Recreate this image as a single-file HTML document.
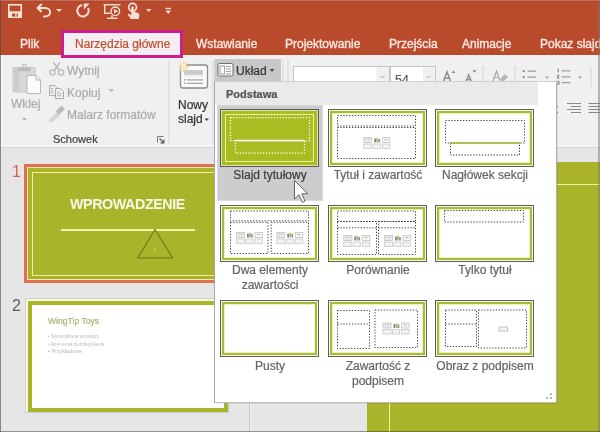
<!DOCTYPE html>
<html><head><meta charset="utf-8"><style>
html,body{margin:0;padding:0;overflow:hidden}
body{width:600px;height:432px;overflow:hidden;position:relative;background:#E6E6E6;font-family:"Liberation Sans",sans-serif}
.a{position:absolute}
.t{position:absolute;white-space:nowrap;will-change:transform;-webkit-text-stroke:0.22px currentColor}
svg{overflow:visible}
</style></head><body>
<div class="a" style="left:0px;top:0px;width:600px;height:55px;background:#BA4A2C"></div>
<div class="a" style="left:0px;top:55px;width:600px;height:92px;background:#F0F0F0"></div>
<div class="a" style="left:0px;top:146px;width:600px;height:1px;background:#F7F7F7"></div>
<div class="a" style="left:0px;top:147px;width:600px;height:1px;background:#D6D6D6"></div>
<div class="a" style="left:0px;top:148px;width:600px;height:284px;background:#E6E6E6"></div>
<svg class="a" style="left:0;top:0" width="180" height="22" viewBox="0 0 180 22">
<g fill="none" stroke="#F7E2D8" stroke-width="1.6">
<rect x="8.8" y="4.8" width="12.4" height="12.4"/>
</g>
<rect x="8" y="11.3" width="14" height="6.7" fill="#F7E2D8"/>
<rect x="12" y="13.6" width="6" height="3" fill="#BA4A2C"/>
<rect x="15.2" y="13.6" width="1.4" height="3" fill="#F7E2D8"/>
<g fill="none" stroke="#F7E2D8" stroke-width="2" stroke-linecap="round" stroke-linejoin="round">
<path d="M41.2,4.6 L37.6,8 L41.2,11.4"/>
<path d="M38,8 H45 C48,8 50.2,10 50.2,12.3 C50.2,14.6 48,16.4 45,16.4 H44"/>
</g>
<path d="M82.3,5.1 A5.7,5.7 0 1 0 88,8" fill="none" stroke="#F7E2D8" stroke-width="2"/>
<path d="M83.8,3.6 L89.6,3.6 L83.8,9.6 Z" fill="#F7E2D8"/>
<path d="M56,9 H62 L59,12 Z" fill="#F7E2D8"/>
<g fill="none" stroke="#F7E2D8" stroke-width="1.4">
<path d="M103.5,4.7 H120.5"/>
<path d="M104.7,5 V13.3 H110"/>
<circle cx="115.3" cy="11.3" r="4.3"/>
<path d="M107,18.3 H117.5"/>
<path d="M112,15.5 V18"/>
<circle cx="132.6" cy="7.3" r="3.9" stroke-width="1.7"/>
</g>
<path d="M114,9 L118,11.3 L114,13.6 Z" fill="#F7E2D8"/>
<path d="M131.3,7.5 C131.3,6.3 133.7,6.3 133.7,7.5 V12 L137.5,12.8 C139,13.2 139.6,14 139.3,15.5 L138.6,19 H131 L128,15 C127.4,14.2 128.3,13.4 129.2,14 L131.3,15.4 Z" fill="#F7E2D8"/>
<path d="M146,9 H151.5 L148.75,12 Z" fill="#F7E2D8"/>
<rect x="165.5" y="7.8" width="5.6" height="1.3" fill="#F7E2D8"/>
<path d="M165.5,10.5 H171.1 L168.3,14 Z" fill="#F7E2D8"/>
</svg>
<div class="t" style="left:19.5px;top:37.33px;font-size:12px;line-height:14.4px;color:#FCE9E2;font-weight:normal;-webkit-text-stroke:0.35px currentColor">Plik</div>
<div class="t" style="left:196px;top:37.33px;font-size:12px;line-height:14.4px;color:#FCE9E2;font-weight:normal;-webkit-text-stroke:0.35px currentColor">Wstawianie</div>
<div class="t" style="left:285px;top:37.33px;font-size:12px;line-height:14.4px;color:#FCE9E2;font-weight:normal;-webkit-text-stroke:0.35px currentColor">Projektowanie</div>
<div class="t" style="left:389px;top:37.33px;font-size:12px;line-height:14.4px;color:#FCE9E2;font-weight:normal;-webkit-text-stroke:0.35px currentColor">Przejścia</div>
<div class="t" style="left:462.3px;top:37.33px;font-size:12px;line-height:14.4px;color:#FCE9E2;font-weight:normal;-webkit-text-stroke:0.35px currentColor">Animacje</div>
<div class="t" style="left:540px;top:37.33px;font-size:12px;line-height:14.4px;color:#FCE9E2;font-weight:normal;-webkit-text-stroke:0.35px currentColor">Pokaz slajdów</div>
<div class="a" style="left:61px;top:30px;width:122px;height:28px;box-sizing:border-box;border:3px solid #CF1D8E;background:#F3EEF1"></div>
<div class="t" style="left:74.5px;top:37.33px;font-size:12px;line-height:14.4px;color:#C14F30;font-weight:normal;-webkit-text-stroke:0.2px currentColor">Narzędzia główne</div>
<svg class="a" style="left:0;top:55" width="600" height="92" viewBox="0 55 600 92">
<!-- paste icon -->
<rect x="13" y="67.5" width="22.5" height="24.5" rx="1" fill="#D8D8D8" stroke="#CACACA" stroke-width="1"/>
<rect x="13.5" y="68" width="6" height="23.5" fill="#CDCDCD"/>
<rect x="18" y="67" width="12.5" height="4.2" rx="1" fill="#BDBDBD"/>
<circle cx="24.2" cy="66" r="1.8" fill="none" stroke="#BDBDBD" stroke-width="1.2"/>
<path d="M27,75.5 H36 L40.5,80 V93.5 H27 Z" fill="#FBFBFB" stroke="#B8B8B8" stroke-width="1"/>
<path d="M36,75.5 V80 H40.5" fill="none" stroke="#B8B8B8" stroke-width="1"/>
<path d="M22,118 H27 L24.5,120.5 Z" fill="#B0B0B0"/>
<!-- scissors -->
<g fill="none" stroke="#B8B8B8" stroke-width="1.3">
<circle cx="52.5" cy="72.5" r="2.6"/><circle cx="61" cy="72.5" r="2.6"/>
<path d="M54,70.5 L60,62.5 M59.5,70.5 L53.5,62.5"/>
</g>
<!-- copy -->
<path d="M49.7,85.6 H54.8 L56.6,87.4 V95.6 H49.7 Z" fill="#F2F2F2" stroke="#A4A4A4" stroke-width="0.95"/>
<path d="M55.6,88.6 H60.6 L63.5,91.5 V98.6 H55.6 Z" fill="#F4F4F4" stroke="#A0A0A0" stroke-width="0.95"/>
<g stroke="#A8A8A8" stroke-width="0.9"><path d="M51,88.5 H53.2 M51,90.6 H53.2 M51,92.6 H53.2 M57.2,91.8 H59.5 M57.2,93.8 H61.8 M57.2,95.8 H61.8"/></g>
<!-- brush -->
<path d="M49,119.5 L56,112.5 L59.5,116 L52.5,122 Z" fill="#D6D6D6"/>
<path d="M55.5,111.5 L61.5,105.5 L65,109 L59,115 Z" fill="#BBBBBB"/>
<path d="M49,119.5 L52.5,122 L49.5,121.5 Z" fill="#C8C8C8"/>
<path d="M108.5,74 H114 L111.25,77 Z" fill="#B8B8B8" transform="translate(0,15)"/>
<!-- dialog launcher -->
<g fill="none" stroke="#7A7A7A" stroke-width="1"><path d="M157.5,142.5 V136.5 H163.5"/></g>
<path d="M159.5,138.5 L163.8,142.8 M163.8,139.5 V142.8 H160.5" stroke="#5A5A5A" stroke-width="1.2" fill="none"/>
<rect x="168.5" y="60" width="1" height="83" fill="#D6D6D6"/>
<!-- new slide icon -->
<rect x="180.5" y="65" width="27" height="23" rx="2.5" fill="#FAFAFA" stroke="#8C8C8C" stroke-width="1.3"/>
<rect x="184" y="70" width="19" height="4.8" fill="#CACACA"/>
<rect x="184" y="75.5" width="19" height="0.8" fill="#E2E2E2"/>
<rect x="184.2" y="79.2" width="1.4" height="1.4" fill="#8A8A8A"/><rect x="187" y="79.3" width="16" height="1.2" fill="#A2A2A2"/>
<rect x="184.2" y="82.6" width="1.4" height="1.4" fill="#8A8A8A"/><rect x="187" y="82.7" width="16" height="1.2" fill="#A2A2A2"/>
<g stroke="#F3DC9A" stroke-width="1.6">
<path d="M183.5,61.5 V72 M178.3,66.8 H188.7 M179.8,63.1 L187.2,70.5 M187.2,63.1 L179.8,70.5"/>
</g>
<circle cx="183.5" cy="66.8" r="3" fill="#F7EBC0"/>
<path d="M204.5,118.5 H209 L206.75,121 Z" fill="#444"/>
<rect x="212.5" y="60" width="1" height="83" fill="#D6D6D6"/>
<!-- layout button -->
<rect x="214.5" y="59" width="66.5" height="22" fill="#C8C8C8"/>
<rect x="218" y="63.5" width="15" height="12.5" rx="1.5" fill="#FAFAFA" stroke="#707070" stroke-width="1"/>
<rect x="220" y="66" width="4.5" height="8" fill="none" stroke="#8A8A8A" stroke-width="0.8"/>
<path d="M226,66.5 H231 M226,69 H231 M226,71.5 H231 M226,74 H231" stroke="#8A8A8A" stroke-width="0.8"/>
<path d="M269.5,69 H274.5 L272,71.8 Z" fill="#444"/>
<rect x="282.5" y="60" width="1" height="83" fill="#D6D6D6"/>
<rect x="287.5" y="60" width="1" height="83" fill="#D6D6D6"/>
<!-- font combos -->
<rect x="293.5" y="66.5" width="96" height="18" fill="#FFFFFF" stroke="#C6C6C6" stroke-width="1"/>
<rect x="376.5" y="67" width="12.5" height="17" fill="#F0F0F0"/>
<path d="M380.5,76 L382.5,78 L384.5,76" stroke="#A0A0A0" fill="none" stroke-width="0.9"/>
<rect x="390.5" y="66.5" width="45" height="18" fill="#FFFFFF" stroke="#C6C6C6" stroke-width="1"/>
<rect x="423" y="67" width="12" height="17" fill="#F0F0F0"/>
<path d="M426.5,76 L428.5,78 L430.5,76" stroke="#A0A0A0" fill="none" stroke-width="0.9"/>
<!-- grow/shrink font -->
<path d="M443.2,82 L447,71.8 L450.8,82 M444.6,78.3 H449.4" stroke="#8E8E8E" stroke-width="1.5" fill="none"/>
<path d="M451.5,73 L453.5,70.5 L455.5,73 Z" fill="#8A8A8A"/>
<path d="M465.8,82 L468.7,74.8 L471.6,82 M466.9,79.5 H470.5" stroke="#8E8E8E" stroke-width="1.4" fill="none"/>
<path d="M472.3,70.3 H476.5 L474.4,72.8 Z" fill="#8A8A8A"/>
<rect x="482.5" y="66" width="1" height="18" fill="#D6D6D6"/>
<path d="M493,81 L496.5,71 L500,81 M494.2,77.5 H498.8" stroke="#A8A8A8" stroke-width="1.2" fill="none"/>
<path d="M500,79 L505,74 L508,77 L503,82 Z" fill="#B5B5B5"/>
<rect x="514.5" y="66" width="1" height="20" fill="#D6D6D6"/>
<!-- bullets -->
<rect x="522.8" y="70.2" width="1.8" height="1.8" fill="#7A7A7A"/><rect x="527.5" y="70.6" width="8.5" height="1" fill="#8A8A8A"/>
<rect x="522.8" y="76.2" width="1.8" height="1.8" fill="#7A7A7A"/><rect x="527.5" y="76.6" width="8.5" height="1" fill="#8A8A8A"/>
<path d="M544.8,76.6 H549.2 L547,79 Z" fill="#A8A8A8"/>
<!-- numbering -->
<g fill="#8A8A8A"><rect x="557.6" y="68.8" width="1.2" height="3.6"/><rect x="556.9" y="74.8" width="2.6" height="1"/><rect x="557.2" y="76" width="1.6" height="1.8"/><rect x="556.9" y="77.6" width="2.6" height="0.9"/><rect x="556.9" y="80.8" width="2.6" height="0.9"/><rect x="558.2" y="81.5" width="1.3" height="2.6"/><rect x="556.9" y="83.6" width="2.6" height="0.9"/></g>
<rect x="561.5" y="70.4" width="9" height="1" fill="#8A8A8A"/>
<rect x="561.5" y="76.4" width="9" height="1" fill="#8A8A8A"/>
<rect x="561.5" y="82.2" width="9" height="1" fill="#8A8A8A"/>
<path d="M577.8,76.6 H582.2 L580,79 Z" fill="#A8A8A8"/>
<rect x="590.5" y="67" width="1" height="20" fill="#D6D6D6"/>
<!-- align right / justify -->
<g fill="#8A8A8A">
<rect x="567" y="103" width="14" height="1"/><rect x="571" y="106" width="10" height="1"/><rect x="567" y="109" width="14" height="1"/><rect x="571" y="112" width="10" height="1"/>
<rect x="588.5" y="103" width="12" height="1"/><rect x="588.5" y="106" width="12" height="1"/><rect x="588.5" y="109" width="12" height="1"/><rect x="588.5" y="112" width="12" height="1"/>
<rect x="556.5" y="106" width="1.5" height="1"/><rect x="556.5" y="112" width="1.5" height="1"/>
</g>
</svg>
<div class="t" style="left:11px;top:96.83px;font-size:12px;line-height:14.4px;color:#ABABAB;font-weight:normal;">Wklej</div>
<div class="t" style="left:66.5px;top:64.03px;font-size:12px;line-height:14.4px;color:#ABABAB;font-weight:normal;">Wytnij</div>
<div class="t" style="left:66.5px;top:85.83px;font-size:12px;line-height:14.4px;color:#ABABAB;font-weight:normal;">Kopiuj</div>
<div class="t" style="left:66.5px;top:107.83px;font-size:12px;line-height:14.4px;color:#ABABAB;font-weight:normal;">Malarz formatów</div>
<div class="t" style="left:52.5px;top:132.76px;font-size:11px;line-height:13.2px;color:#454545;font-weight:normal;">Schowek</div>
<div class="t" style="left:177.5px;top:97.83px;font-size:12px;line-height:14.4px;color:#333;font-weight:normal;">Nowy</div>
<div class="t" style="left:177.5px;top:112.43px;font-size:12px;line-height:14.4px;color:#333;font-weight:normal;">slajd</div>
<div class="t" style="left:236px;top:64.03px;font-size:12px;line-height:14.4px;color:#333;font-weight:normal;">Układ</div>
<div class="t" style="left:394.5px;top:72.87px;font-size:12.5px;line-height:15.0px;color:#5A5A5A;font-weight:normal;">54</div>
<div class="a" style="left:249px;top:148px;width:1px;height:284px;background:#C6C6C6"></div>
<div class="a" style="left:250px;top:148px;width:1px;height:284px;background:#F2F2F2"></div>
<div class="t" style="left:12px;top:161.91px;font-size:16px;line-height:19.2px;color:#D2674A;font-weight:normal;-webkit-text-stroke:0">1</div>
<div class="t" style="left:11.5px;top:295.61px;font-size:16px;line-height:19.2px;color:#5E5E5E;font-weight:normal;-webkit-text-stroke:0">2</div>
<div class="a" style="left:24px;top:164px;width:208px;height:119px;box-sizing:border-box;border:3px solid #E0704F;background:#F8E7B6"></div>
<div class="a" style="left:28px;top:168px;width:200px;height:111px;background:#AAB42A"></div>
<div class="a" style="left:31.5px;top:171.5px;width:193px;height:104px;box-sizing:border-box;border:1.5px solid #EEF29A"></div>
<div class="t" style="left:69.8px;top:195.89px;font-size:14.3px;line-height:17.16px;color:#F6F8E6;font-weight:bold;letter-spacing:-0.42px;-webkit-text-stroke:0">WPROWADZENIE</div>
<div class="a" style="left:60.5px;top:229.3px;width:134.5px;height:1.3px;background:#EEF2A8"></div>
<svg class="a" style="left:0;top:0" width="250" height="300" viewBox="0 0 250 300">
<path d="M155,229.5 L137.8,257.8 H172.5 Z" fill="none" stroke="#73821C" stroke-width="1.3"/>
<rect x="154.3" y="248.5" width="1.2" height="2.2" fill="#D8E080"/>
</svg>
<div class="a" style="left:25px;top:298px;width:204px;height:115px;box-sizing:border-box;border:1px solid #CFCFD4;background:#F4F8DC"></div>
<div class="a" style="left:28px;top:300.5px;width:199.5px;height:111.5px;box-sizing:border-box;border:4px solid #AAB42A;background:#FFFFFD"></div>
<div class="t" style="left:47.5px;top:316.00px;font-size:8.6px;line-height:10.32px;color:#A9B47A;font-weight:normal;">WingTip Toys</div>
<svg class="a" style="left:0;top:0" width="250" height="432" viewBox="0 0 250 432">
<g fill="#B9BBB0" font-family="Liberation Sans" font-size="5.2"><text x="48" y="338.2" textLength="51" lengthAdjust="spacingAndGlyphs">• Strona główna sprzedaży</text><text x="48" y="345.8" textLength="56" lengthAdjust="spacingAndGlyphs">• Adres e-mail do obsługi klienta</text><text x="48" y="352.6" textLength="34" lengthAdjust="spacingAndGlyphs">• Przykładowe</text></g>
</svg>
<div class="a" style="left:367px;top:162px;width:233px;height:270px;background:#AAB42A"></div>
<div class="a" style="left:389px;top:184px;width:211px;height:1.3px;background:#EEF29A"></div>
<div class="a" style="left:389px;top:184px;width:1.3px;height:248px;background:#EEF29A"></div>
<div class="a" style="left:215px;top:82px;width:343px;height:322px;background:rgba(0,0,0,0.08)"></div>
<div class="a" style="left:214px;top:81px;width:343px;height:322px;box-sizing:border-box;border:1px solid;border-color:#D0D0D0 #B0B0B0 #BDBDBD #A8A8A8;background:#FFFFFF"></div>
<div class="a" style="left:215px;top:82px;width:323px;height:23px;background:#EAEAEA"></div>
<div class="t" style="left:225.5px;top:87.56px;font-size:11px;line-height:13.2px;color:#555;font-weight:bold;">Podstawa</div>
<div class="a" style="left:216.5px;top:105px;width:106.5px;height:95.5px;box-sizing:border-box;border:1px solid #DADADC;background:#CDCDCF"></div>
<svg class="a" style="left:0;top:0" width="600" height="432" viewBox="0 0 600 432">
<g transform="translate(220,109)"><rect x="0.5" y="0.5" width="98" height="57" fill="#DDE6A8" stroke="#5A5A5A" stroke-width="1"/>
<rect x="3" y="3" width="93" height="52" fill="#A8BD22" stroke="#A8BD22" stroke-width="2"/>
<rect x="5.5" y="5.5" width="88" height="47" fill="none" stroke="#EEF29A" stroke-width="1"/><rect x="10.5" y="8.5" width="79.0" height="23.0" fill="none" stroke="#FFFFFF" stroke-width="1.25" stroke-dasharray="1.3 1.6"/><path d="M15.5,31.5 H84.5" stroke="#FFFFFF" stroke-width="1.4"/><rect x="15.5" y="31.5" width="69.0" height="12.5" fill="none" stroke="#FFFFFF" stroke-width="1.25" stroke-dasharray="1.3 1.6"/></g>
<g transform="translate(328,109)"><rect x="0.5" y="0.5" width="98" height="57" fill="#F6F9E0" stroke="#5E5E5E" stroke-width="1"/>
<rect x="3" y="3" width="93" height="52" fill="none" stroke="#A9BA3A" stroke-width="2"/>
<rect x="4.5" y="4.5" width="90" height="49" fill="#FFFFFF" stroke="#EEF4B4" stroke-width="1"/><rect x="9.5" y="6.5" width="78.0" height="10.5" fill="none" stroke="#3A3A3A" stroke-width="0.95" stroke-dasharray="1.3 1.6"/><rect x="9.5" y="18.5" width="78.0" height="31.0" fill="none" stroke="#3A3A3A" stroke-width="0.95" stroke-dasharray="1.3 1.6"/><g transform="translate(35.3,28)">
<rect x="0.5" y="0.5" width="8" height="5" fill="#F4F4F4" stroke="#C4C4C4" stroke-width="0.8"/>
<path d="M0.5,2.2 H8.5 M3,0.5 V5.5 M5.7,0.5 V5.5" stroke="#C4C4C4" stroke-width="0.6"/>
<rect x="11" y="1.5" width="1.8" height="4" fill="#7E8796"/><rect x="13.1" y="0.8" width="1.8" height="4.7" fill="#B9B46A"/><rect x="15.2" y="2" width="1.6" height="3.5" fill="#8E8E7E"/>
<rect x="19" y="0.5" width="7.5" height="5" fill="#F6F6F6" stroke="#C4C4C4" stroke-width="0.8"/>
<path d="M21,2.5 H24.5" stroke="#B0B0B0" stroke-width="0.8"/>
<rect x="0.5" y="7" width="8" height="4.5" fill="#F2F2F2" stroke="#C8C8C8" stroke-width="0.8"/>
<rect x="10" y="7" width="7" height="4.5" fill="#F2F4F8" stroke="#C4CCD8" stroke-width="0.8"/>
<rect x="19" y="7" width="7.5" height="4.5" fill="#F2F2F2" stroke="#C8C8C8" stroke-width="0.8"/>
</g></g>
<g transform="translate(435,109)"><rect x="0.5" y="0.5" width="98" height="57" fill="#F6F9E0" stroke="#5E5E5E" stroke-width="1"/>
<rect x="3" y="3" width="93" height="52" fill="none" stroke="#A9BA3A" stroke-width="2"/>
<rect x="4.5" y="4.5" width="90" height="49" fill="#FFFFFF" stroke="#EEF4B4" stroke-width="1"/><rect x="10.5" y="11.5" width="79.0" height="22.5" fill="none" stroke="#3A3A3A" stroke-width="0.95" stroke-dasharray="1.3 1.6"/><path d="M15.5,34 V46 H84.5 V34" fill="none" stroke="#333" stroke-width="1" stroke-dasharray="1.3 1.6"/><path d="M15,34 H85" stroke="#AAB42A" stroke-width="1.3"/></g>
<g transform="translate(220,205)"><rect x="0.5" y="0.5" width="98" height="56" fill="#F6F9E0" stroke="#5E5E5E" stroke-width="1"/>
<rect x="3" y="3" width="93" height="51" fill="none" stroke="#A9BA3A" stroke-width="2"/>
<rect x="4.5" y="4.5" width="90" height="48" fill="#FFFFFF" stroke="#EEF4B4" stroke-width="1"/><rect x="10.5" y="6" width="78.0" height="9.8" fill="none" stroke="#3A3A3A" stroke-width="0.95" stroke-dasharray="1.3 1.6"/><rect x="10.5" y="17.3" width="37.5" height="31.2" fill="none" stroke="#3A3A3A" stroke-width="0.95" stroke-dasharray="1.3 1.6"/><rect x="51.2" y="17.3" width="37.3" height="31.2" fill="none" stroke="#3A3A3A" stroke-width="0.95" stroke-dasharray="1.3 1.6"/><g transform="translate(16.0,27)">
<rect x="0.5" y="0.5" width="8" height="5" fill="#F4F4F4" stroke="#C4C4C4" stroke-width="0.8"/>
<path d="M0.5,2.2 H8.5 M3,0.5 V5.5 M5.7,0.5 V5.5" stroke="#C4C4C4" stroke-width="0.6"/>
<rect x="11" y="1.5" width="1.8" height="4" fill="#7E8796"/><rect x="13.1" y="0.8" width="1.8" height="4.7" fill="#B9B46A"/><rect x="15.2" y="2" width="1.6" height="3.5" fill="#8E8E7E"/>
<rect x="19" y="0.5" width="7.5" height="5" fill="#F6F6F6" stroke="#C4C4C4" stroke-width="0.8"/>
<path d="M21,2.5 H24.5" stroke="#B0B0B0" stroke-width="0.8"/>
<rect x="0.5" y="7" width="8" height="4.5" fill="#F2F2F2" stroke="#C8C8C8" stroke-width="0.8"/>
<rect x="10" y="7" width="7" height="4.5" fill="#F2F4F8" stroke="#C4CCD8" stroke-width="0.8"/>
<rect x="19" y="7" width="7.5" height="4.5" fill="#F2F2F2" stroke="#C8C8C8" stroke-width="0.8"/>
</g><g transform="translate(56.3,27)">
<rect x="0.5" y="0.5" width="8" height="5" fill="#F4F4F4" stroke="#C4C4C4" stroke-width="0.8"/>
<path d="M0.5,2.2 H8.5 M3,0.5 V5.5 M5.7,0.5 V5.5" stroke="#C4C4C4" stroke-width="0.6"/>
<rect x="11" y="1.5" width="1.8" height="4" fill="#7E8796"/><rect x="13.1" y="0.8" width="1.8" height="4.7" fill="#B9B46A"/><rect x="15.2" y="2" width="1.6" height="3.5" fill="#8E8E7E"/>
<rect x="19" y="0.5" width="7.5" height="5" fill="#F6F6F6" stroke="#C4C4C4" stroke-width="0.8"/>
<path d="M21,2.5 H24.5" stroke="#B0B0B0" stroke-width="0.8"/>
<rect x="0.5" y="7" width="8" height="4.5" fill="#F2F2F2" stroke="#C8C8C8" stroke-width="0.8"/>
<rect x="10" y="7" width="7" height="4.5" fill="#F2F4F8" stroke="#C4CCD8" stroke-width="0.8"/>
<rect x="19" y="7" width="7.5" height="4.5" fill="#F2F2F2" stroke="#C8C8C8" stroke-width="0.8"/>
</g></g>
<g transform="translate(328,205)"><rect x="0.5" y="0.5" width="98" height="56" fill="#F6F9E0" stroke="#5E5E5E" stroke-width="1"/>
<rect x="3" y="3" width="93" height="51" fill="none" stroke="#A9BA3A" stroke-width="2"/>
<rect x="4.5" y="4.5" width="90" height="48" fill="#FFFFFF" stroke="#EEF4B4" stroke-width="1"/><rect x="9.5" y="6" width="78.0" height="10.5" fill="none" stroke="#3A3A3A" stroke-width="0.95" stroke-dasharray="1.3 1.6"/><rect x="9.5" y="16.5" width="39.0" height="33.0" fill="none" stroke="#3A3A3A" stroke-width="0.95" stroke-dasharray="1.3 1.6"/><path d="M9.5,22.8 H48.5" stroke="#3A3A3A" stroke-width="0.95" stroke-dasharray="1.3 1.6"/><rect x="50.5" y="16.5" width="37.0" height="33.0" fill="none" stroke="#3A3A3A" stroke-width="0.95" stroke-dasharray="1.3 1.6"/><path d="M50.5,22.8 H87.5" stroke="#3A3A3A" stroke-width="0.95" stroke-dasharray="1.3 1.6"/><g transform="translate(15.3,30)">
<rect x="0.5" y="0.5" width="8" height="5" fill="#F4F4F4" stroke="#C4C4C4" stroke-width="0.8"/>
<path d="M0.5,2.2 H8.5 M3,0.5 V5.5 M5.7,0.5 V5.5" stroke="#C4C4C4" stroke-width="0.6"/>
<rect x="11" y="1.5" width="1.8" height="4" fill="#7E8796"/><rect x="13.1" y="0.8" width="1.8" height="4.7" fill="#B9B46A"/><rect x="15.2" y="2" width="1.6" height="3.5" fill="#8E8E7E"/>
<rect x="19" y="0.5" width="7.5" height="5" fill="#F6F6F6" stroke="#C4C4C4" stroke-width="0.8"/>
<path d="M21,2.5 H24.5" stroke="#B0B0B0" stroke-width="0.8"/>
<rect x="0.5" y="7" width="8" height="4.5" fill="#F2F2F2" stroke="#C8C8C8" stroke-width="0.8"/>
<rect x="10" y="7" width="7" height="4.5" fill="#F2F4F8" stroke="#C4CCD8" stroke-width="0.8"/>
<rect x="19" y="7" width="7.5" height="4.5" fill="#F2F2F2" stroke="#C8C8C8" stroke-width="0.8"/>
</g><g transform="translate(56.0,30)">
<rect x="0.5" y="0.5" width="8" height="5" fill="#F4F4F4" stroke="#C4C4C4" stroke-width="0.8"/>
<path d="M0.5,2.2 H8.5 M3,0.5 V5.5 M5.7,0.5 V5.5" stroke="#C4C4C4" stroke-width="0.6"/>
<rect x="11" y="1.5" width="1.8" height="4" fill="#7E8796"/><rect x="13.1" y="0.8" width="1.8" height="4.7" fill="#B9B46A"/><rect x="15.2" y="2" width="1.6" height="3.5" fill="#8E8E7E"/>
<rect x="19" y="0.5" width="7.5" height="5" fill="#F6F6F6" stroke="#C4C4C4" stroke-width="0.8"/>
<path d="M21,2.5 H24.5" stroke="#B0B0B0" stroke-width="0.8"/>
<rect x="0.5" y="7" width="8" height="4.5" fill="#F2F2F2" stroke="#C8C8C8" stroke-width="0.8"/>
<rect x="10" y="7" width="7" height="4.5" fill="#F2F4F8" stroke="#C4CCD8" stroke-width="0.8"/>
<rect x="19" y="7" width="7.5" height="4.5" fill="#F2F2F2" stroke="#C8C8C8" stroke-width="0.8"/>
</g></g>
<g transform="translate(435,205)"><rect x="0.5" y="0.5" width="98" height="56" fill="#F6F9E0" stroke="#5E5E5E" stroke-width="1"/>
<rect x="3" y="3" width="93" height="51" fill="none" stroke="#A9BA3A" stroke-width="2"/>
<rect x="4.5" y="4.5" width="90" height="48" fill="#FFFFFF" stroke="#EEF4B4" stroke-width="1"/><rect x="9.5" y="5.5" width="79.0" height="11.5" fill="none" stroke="#3A3A3A" stroke-width="0.95" stroke-dasharray="1.3 1.6"/></g>
<g transform="translate(220,300)"><rect x="0.5" y="0.5" width="98" height="56" fill="#F6F9E0" stroke="#5E5E5E" stroke-width="1"/>
<rect x="3" y="3" width="93" height="51" fill="none" stroke="#A9BA3A" stroke-width="2"/>
<rect x="4.5" y="4.5" width="90" height="48" fill="#FFFFFF" stroke="#EEF4B4" stroke-width="1"/></g>
<g transform="translate(328,300)"><rect x="0.5" y="0.5" width="98" height="56" fill="#F6F9E0" stroke="#5E5E5E" stroke-width="1"/>
<rect x="3" y="3" width="93" height="51" fill="none" stroke="#A9BA3A" stroke-width="2"/>
<rect x="4.5" y="4.5" width="90" height="48" fill="#FFFFFF" stroke="#EEF4B4" stroke-width="1"/><rect x="9.5" y="10.5" width="32.0" height="38.0" fill="none" stroke="#3A3A3A" stroke-width="0.95" stroke-dasharray="1.3 1.6"/><path d="M9.5,24 H41.5" stroke="#3A3A3A" stroke-width="0.95" stroke-dasharray="1.3 1.6"/><rect x="47" y="10" width="42.5" height="37.5" fill="none" stroke="#3A3A3A" stroke-width="0.95" stroke-dasharray="1.3 1.6"/><g transform="translate(54.5,22.5)">
<rect x="0.5" y="0.5" width="8" height="5" fill="#F4F4F4" stroke="#C4C4C4" stroke-width="0.8"/>
<path d="M0.5,2.2 H8.5 M3,0.5 V5.5 M5.7,0.5 V5.5" stroke="#C4C4C4" stroke-width="0.6"/>
<rect x="11" y="1.5" width="1.8" height="4" fill="#7E8796"/><rect x="13.1" y="0.8" width="1.8" height="4.7" fill="#B9B46A"/><rect x="15.2" y="2" width="1.6" height="3.5" fill="#8E8E7E"/>
<rect x="19" y="0.5" width="7.5" height="5" fill="#F6F6F6" stroke="#C4C4C4" stroke-width="0.8"/>
<path d="M21,2.5 H24.5" stroke="#B0B0B0" stroke-width="0.8"/>
<rect x="0.5" y="7" width="8" height="4.5" fill="#F2F2F2" stroke="#C8C8C8" stroke-width="0.8"/>
<rect x="10" y="7" width="7" height="4.5" fill="#F2F4F8" stroke="#C4CCD8" stroke-width="0.8"/>
<rect x="19" y="7" width="7.5" height="4.5" fill="#F2F2F2" stroke="#C8C8C8" stroke-width="0.8"/>
</g></g>
<g transform="translate(435,300)"><rect x="0.5" y="0.5" width="98" height="56" fill="#F6F9E0" stroke="#5E5E5E" stroke-width="1"/>
<rect x="3" y="3" width="93" height="51" fill="none" stroke="#A9BA3A" stroke-width="2"/>
<rect x="4.5" y="4.5" width="90" height="48" fill="#FFFFFF" stroke="#EEF4B4" stroke-width="1"/><rect x="10.5" y="10" width="31.0" height="36.5" fill="none" stroke="#3A3A3A" stroke-width="0.95" stroke-dasharray="1.3 1.6"/><path d="M10.5,24 H41.5" stroke="#3A3A3A" stroke-width="0.95" stroke-dasharray="1.3 1.6"/><rect x="43.5" y="10" width="48.0" height="38" fill="none" stroke="#3A3A3A" stroke-width="0.95" stroke-dasharray="1.3 1.6"/><rect x="64" y="27" width="8.5" height="4" fill="#F4F4F4" stroke="#B4B4B4" stroke-width="0.8"/></g>
<g fill="#8E8E8E"><rect x="550.2" y="393.5" width="1.6" height="1.6"/><rect x="546.5" y="397.2" width="1.6" height="1.6"/><rect x="550.2" y="397.2" width="1.6" height="1.6"/></g>
</svg>
<div class="t" style="left:170px;width:200px;text-align:center;top:167.63px;font-size:12px;line-height:14.4px;color:#3C3C3C;font-weight:normal;">Slajd tytułowy</div>
<div class="t" style="left:277.5px;width:200px;text-align:center;top:167.63px;font-size:12px;line-height:14.4px;color:#666666;font-weight:normal;">Tytuł i zawartość</div>
<div class="t" style="left:384.5px;width:200px;text-align:center;top:167.63px;font-size:12px;line-height:14.4px;color:#666666;font-weight:normal;">Nagłówek sekcji</div>
<div class="t" style="left:170px;width:200px;text-align:center;top:263.33px;font-size:12px;line-height:14.4px;color:#666666;font-weight:normal;">Dwa elementy</div>
<div class="t" style="left:170px;width:200px;text-align:center;top:278.33px;font-size:12px;line-height:14.4px;color:#666666;font-weight:normal;">zawartości</div>
<div class="t" style="left:277.5px;width:200px;text-align:center;top:263.33px;font-size:12px;line-height:14.4px;color:#666666;font-weight:normal;">Porównanie</div>
<div class="t" style="left:384.5px;width:200px;text-align:center;top:263.33px;font-size:12px;line-height:14.4px;color:#666666;font-weight:normal;">Tylko tytuł</div>
<div class="t" style="left:170px;width:200px;text-align:center;top:358.83px;font-size:12px;line-height:14.4px;color:#666666;font-weight:normal;">Pusty</div>
<div class="t" style="left:277.5px;width:200px;text-align:center;top:358.83px;font-size:12px;line-height:14.4px;color:#666666;font-weight:normal;">Zawartość z</div>
<div class="t" style="left:277.5px;width:200px;text-align:center;top:373.83px;font-size:12px;line-height:14.4px;color:#666666;font-weight:normal;">podpisem</div>
<div class="t" style="left:384.5px;width:200px;text-align:center;top:358.83px;font-size:12px;line-height:14.4px;color:#666666;font-weight:normal;">Obraz z podpisem</div>
<svg class="a" style="left:0;top:0" width="600" height="432" viewBox="0 0 600 432">
<path d="M294.5,180.5 V199 L299,194.8 L302.3,202.3 L305,201.2 L301.8,193.8 L307.8,193.8 Z" fill="#FFFFFF" stroke="#555555" stroke-width="0.9" stroke-linejoin="miter"/>
</svg>
<div class="a" style="left:0px;top:0px;width:1px;height:432px;background:rgba(70,70,70,0.6)"></div>
<div class="a" style="left:1px;top:55px;width:1px;height:92px;background:#FAFAFA"></div>
<div class="a" style="left:598px;top:0px;width:2px;height:432px;background:rgba(120,120,120,0.5)"></div>
<div class="a" style="left:0px;top:431px;width:600px;height:1px;background:rgba(60,60,60,0.5)"></div>
<div class="a" style="left:0px;top:0px;width:600px;height:1px;background:rgba(200,160,150,0.45)"></div>
<div class="a" style="left:0px;top:1px;width:600px;height:1px;background:rgba(120,40,20,0.15)"></div>
</body></html>
